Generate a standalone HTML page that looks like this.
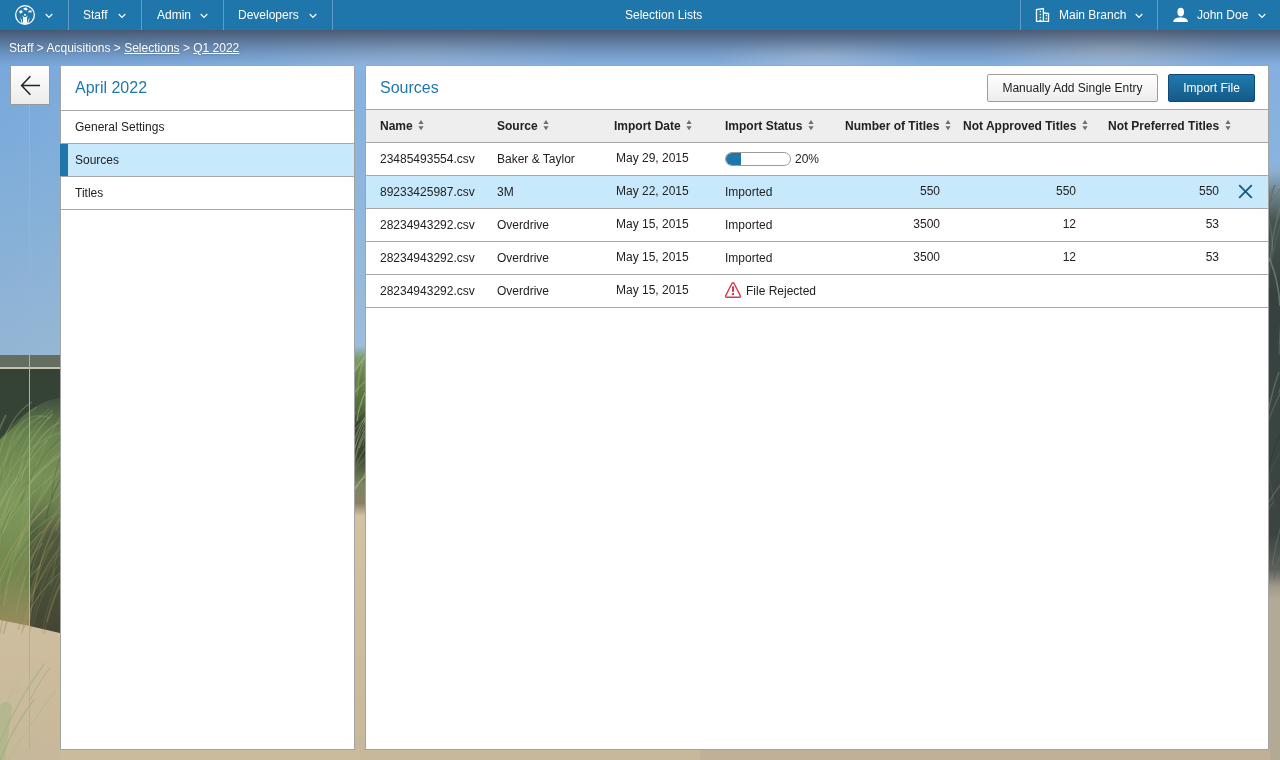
<!DOCTYPE html>
<html><head><meta charset="utf-8">
<style>
*{box-sizing:border-box;margin:0;padding:0}
html,body{width:1280px;height:760px;overflow:hidden}
.panel,.nav,.crumb{will-change:transform}
body{font-family:"Liberation Sans",sans-serif;font-size:12px;color:#222;position:relative;background:#c9b99c}
#bg{position:absolute;left:0;top:0;width:1280px;height:760px;overflow:hidden}
.nav{position:absolute;left:0;top:0;width:1280px;height:30px;background:#1e76ab;color:#fff;font-size:12px}
.nav .dv{position:absolute;top:0;width:1px;height:30px;background:#5d9cc6}
.nav .t{position:absolute;top:8px;line-height:14px;white-space:nowrap}
.nav svg{position:absolute}
.crumb{position:absolute;left:9px;top:41px;color:#fff;font-size:12px;line-height:15px;white-space:nowrap;text-shadow:0 0 2px rgba(0,0,0,.25)}
.crumb u{text-decoration:underline}
.back{position:absolute;left:10px;top:65px;width:40px;height:40px;border:1px solid #9a9a9a;background:linear-gradient(#fff,#ececec)}
.vline{position:absolute;left:29px;top:105px;width:1px;height:645px;background:#b4ada2}
.panel{position:absolute;background:#fff;border:1px solid #a3a3a3}
#lp{left:60px;top:65px;width:295px;height:685px}
#rp{left:365px;top:65px;width:904px;height:685px}
.ptitle{position:absolute;color:#1f78ae;font-size:16px;line-height:20px;white-space:nowrap}
.item{position:absolute;left:0;width:293px;height:34px;border-top:1px solid #a8a8a8;border-bottom:1px solid #a8a8a8}
.item span{position:absolute;left:14px;top:9px;line-height:15px}
.sel{background:#c8e9fc}
.item.sel:before{content:"";position:absolute;left:-1px;top:0;width:8px;height:32px;background:#1f76ab}
.btn{position:absolute;top:8px;height:28px;border-radius:2px;font-size:12px;line-height:26px;text-align:center;white-space:nowrap}
.b1{left:621px;width:171px;border:1px solid #9d9d9d;background:linear-gradient(#fff,#ececec);color:#222}
.b2{left:802px;width:87px;border:1px solid #0e4a72;background:linear-gradient(#1f7ab0,#135a88);color:#fff}
.thead{position:absolute;left:0;top:43px;width:902px;height:34px;background:#eeeeee;border-top:1px solid #a8a8a8;border-bottom:1px solid #a8a8a8}
.th{position:absolute;top:9px;font-weight:bold;line-height:15px;white-space:nowrap;color:#222}
.sort{display:inline-block;margin-left:5.5px;vertical-align:-1px}
.row{position:absolute;left:0;width:902px;height:34px;border-top:1px solid #a8a8a8;border-bottom:1px solid #a8a8a8}
.prog{position:absolute;left:359px;top:9px;width:66px;height:14px;border:1px solid #9a9a9a;border-radius:7px;overflow:hidden;background:#fff}
.prog i{position:absolute;left:0;top:0;width:15px;height:12px;background:#1f76ab}
.row .c{position:absolute;top:9px;line-height:15px;white-space:nowrap}
.row .d{top:8px}
.r{text-align:right}
</style></head><body>
<svg id="bg" width="1280" height="760" viewBox="0 0 1280 760" style="position:absolute;left:0;top:0">
  <defs>
    <linearGradient id="sky" x1="0" y1="30" x2="0" y2="360" gradientUnits="userSpaceOnUse">
      <stop offset="0" stop-color="#6f9fd4"/><stop offset="0.1" stop-color="#78a8dc"/><stop offset="0.35" stop-color="#7eacda"/><stop offset="0.65" stop-color="#88b1d7"/><stop offset="1" stop-color="#94b6d4"/>
    </linearGradient>
    <linearGradient id="shade" x1="0" y1="30" x2="0" y2="66" gradientUnits="userSpaceOnUse">
      <stop offset="0" stop-color="#353c4c" stop-opacity="0.72"/><stop offset="0.35" stop-color="#3a4458" stop-opacity="0.45"/><stop offset="0.7" stop-color="#44546c" stop-opacity="0.2"/><stop offset="1" stop-color="#44546c" stop-opacity="0"/>
    </linearGradient>
    <linearGradient id="skyh" x1="0" y1="0" x2="1280" y2="0" gradientUnits="userSpaceOnUse">
      <stop offset="0" stop-color="#ffffff" stop-opacity="0"/><stop offset="0.05" stop-color="#ffffff" stop-opacity="0.02"/><stop offset="0.28" stop-color="#d8e8ff" stop-opacity="0.14"/><stop offset="1" stop-color="#d8e8ff" stop-opacity="0.12"/>
    </linearGradient>
    <radialGradient id="cloud1" cx="1110" cy="48" r="130" gradientUnits="userSpaceOnUse" gradientTransform="translate(1110 48) scale(1 0.25) translate(-1110 -48)">
      <stop offset="0" stop-color="#c8cdd4" stop-opacity="0.55"/><stop offset="1" stop-color="#c8cdd4" stop-opacity="0"/>
    </radialGradient>
    <radialGradient id="cloud2" cx="420" cy="52" r="160" gradientUnits="userSpaceOnUse" gradientTransform="translate(420 52) scale(1 0.2) translate(-420 -52)">
      <stop offset="0" stop-color="#b8c4d4" stop-opacity="0.35"/><stop offset="1" stop-color="#b8c4d4" stop-opacity="0"/>
    </radialGradient>
    <radialGradient id="cloud3" cx="820" cy="56" r="110" gradientUnits="userSpaceOnUse" gradientTransform="translate(820 56) scale(1 0.2) translate(-820 -56)">
      <stop offset="0" stop-color="#c8d4e4" stop-opacity="0.45"/><stop offset="1" stop-color="#c8d4e4" stop-opacity="0"/>
    </radialGradient>
    <linearGradient id="lgr" x1="0" y1="369" x2="0" y2="635" gradientUnits="userSpaceOnUse">
      <stop offset="0" stop-color="#37443a"/><stop offset="0.12" stop-color="#42553e"/><stop offset="0.25" stop-color="#6a8450"/><stop offset="0.5" stop-color="#7e985c"/><stop offset="0.75" stop-color="#72884e"/><stop offset="0.9" stop-color="#8a8a58"/><stop offset="1" stop-color="#a08a60"/>
    </linearGradient>
    <linearGradient id="lgr2" x1="0" y1="480" x2="0" y2="635" gradientUnits="userSpaceOnUse">
      <stop offset="0" stop-color="#4b5a3c" stop-opacity="0"/><stop offset="0.35" stop-color="#3e4434" stop-opacity="0.7"/><stop offset="1" stop-color="#34382c" stop-opacity="0.85"/>
    </linearGradient>
    <linearGradient id="sand" x1="0" y1="500" x2="0" y2="760" gradientUnits="userSpaceOnUse">
      <stop offset="0" stop-color="#d3c3a2"/><stop offset="1" stop-color="#c8b89b"/>
    </linearGradient>
    <linearGradient id="gap" x1="0" y1="347" x2="0" y2="515" gradientUnits="userSpaceOnUse">
      <stop offset="0" stop-color="#9ab8c8"/><stop offset="0.07" stop-color="#7a9a6a"/><stop offset="0.2" stop-color="#5f7c48"/><stop offset="0.35" stop-color="#55703f"/><stop offset="0.45" stop-color="#3a4634"/><stop offset="0.65" stop-color="#3a4232"/><stop offset="0.82" stop-color="#7a8660"/><stop offset="0.93" stop-color="#8a8066"/><stop offset="1" stop-color="#cdbd9c"/>
    </linearGradient>
    <linearGradient id="rgt" x1="0" y1="160" x2="0" y2="600" gradientUnits="userSpaceOnUse">
      <stop offset="0" stop-color="#8db4d9" stop-opacity="0"/><stop offset="0.03" stop-color="#8aaccb"/><stop offset="0.08" stop-color="#6a8088"/><stop offset="0.14" stop-color="#46544f"/><stop offset="0.3" stop-color="#364140"/><stop offset="0.6" stop-color="#3a4440"/><stop offset="0.85" stop-color="#3c4442"/><stop offset="0.93" stop-color="#5c605a"/><stop offset="0.97" stop-color="#a09a8a"/><stop offset="1" stop-color="#b4ab97"/>
    </linearGradient>
  </defs>
  <rect x="0" y="30" width="1280" height="330" fill="url(#sky)"/>
  <rect x="0" y="30" width="1280" height="330" fill="url(#skyh)"/>
  <rect x="0" y="30" width="1280" height="40" fill="url(#cloud1)"/>
  <rect x="0" y="30" width="1280" height="40" fill="url(#cloud2)"/>
  <rect x="0" y="30" width="1280" height="40" fill="url(#cloud3)"/>
  <rect x="0" y="30" width="1280" height="36" fill="url(#shade)"/>
  <!-- left strip ground -->
  <rect x="0" y="355" width="60" height="405" fill="url(#sand)"/>
  <rect x="0" y="355" width="60" height="13" fill="#646e5e"/>
  <rect x="0" y="367" width="60" height="2" fill="#c4c4aa"/>
  <path d="M0 369 H60 V633 L30 626 L0 620 Z" fill="url(#lgr)"/>
  <path d="M0 369 H60 V398 Q40 400 25 415 Q10 430 0 440 Z" fill="#354236"/>
  <path d="M30 470 Q45 470 60 460 V633 L30 626 Z" fill="url(#lgr2)"/>
  <g fill="none" stroke-linecap="round">
    <path d="M0 742 Q18 700 44 664" stroke="#9ab478" stroke-width="1.6" opacity="0.55"/>
    <path d="M0 760 Q16 722 34 700" stroke="#8fae6e" stroke-width="1.4" opacity="0.5"/>
    <path d="M8 760 Q30 724 56 690" stroke="#a6b888" stroke-width="1.2" opacity="0.45"/>
    <path d="M20 760 Q40 730 60 712" stroke="#a8b890" stroke-width="1" opacity="0.4"/>
    <path d="M0 716 Q10 690 26 672" stroke="#b0b890" stroke-width="1" opacity="0.4"/>
    <path d="M30 700 Q40 680 50 668" stroke="#7a8a70" stroke-width="0.8" opacity="0.4"/>
  </g>
  <path d="M0 705 Q6 698 12 706 L5 760 H0 Z" fill="#9cb47c" opacity="0.45"/>
  <!-- gap -->
  <rect x="354" y="347" width="12" height="413" fill="url(#sand)"/>
  <rect x="354" y="347" width="12" height="168" fill="url(#gap)"/>
  <!-- right strip -->
  <rect x="1268" y="590" width="12" height="170" fill="#b3aa96"/>
  <rect x="1268" y="160" width="12" height="440" fill="url(#rgt)"/>
  <clipPath id="cl"><rect x="0" y="372" width="60" height="262"/></clipPath>
  <clipPath id="cg"><rect x="354" y="352" width="12" height="160"/></clipPath>
  <clipPath id="cr"><rect x="1268" y="185" width="12" height="400"/></clipPath>
  <g clip-path="url(#cl)" fill="none"><path d="M6 496 Q13 421 43 416" stroke="#8ea866" stroke-width="1.7" opacity="0.27"/><path d="M-13 541 Q-3 491 38 457" stroke="#9aa870" stroke-width="0.9" opacity="0.27"/><path d="M30 631 Q42 560 90 513" stroke="#8a7a50" stroke-width="1.1" opacity="0.25"/><path d="M-11 522 Q-0 437 41 417" stroke="#a4b47a" stroke-width="0.9" opacity="0.40"/><path d="M25 575 Q38 509 90 466" stroke="#5e7a44" stroke-width="1.4" opacity="0.33"/><path d="M4 605 Q15 527 57 475" stroke="#9aa870" stroke-width="1.7" opacity="0.41"/><path d="M3 637 Q11 594 41 565" stroke="#7a9a58" stroke-width="1.2" opacity="0.47"/><path d="M-14 565 Q8 482 95 426" stroke="#a4b47a" stroke-width="1.4" opacity="0.37"/><path d="M16 613 Q34 520 103 458" stroke="#a89868" stroke-width="1.4" opacity="0.48"/><path d="M46 518 Q59 459 113 420" stroke="#3a4432" stroke-width="1.2" opacity="0.37"/><path d="M19 507 Q32 454 84 418" stroke="#5e7a44" stroke-width="0.9" opacity="0.33"/><path d="M24 620 Q47 535 139 478" stroke="#a89868" stroke-width="1.5" opacity="0.31"/><path d="M-2 484 Q9 439 49 409" stroke="#9aa870" stroke-width="1.0" opacity="0.29"/><path d="M-8 561 Q3 488 47 440" stroke="#9aa870" stroke-width="1.8" opacity="0.38"/><path d="M39 548 Q65 459 167 401" stroke="#7a8258" stroke-width="1.2" opacity="0.32"/><path d="M-12 578 Q-8 538 8 512" stroke="#7a9a58" stroke-width="0.9" opacity="0.37"/><path d="M-12 566 Q8 498 87 453" stroke="#8ea866" stroke-width="1.7" opacity="0.38"/><path d="M-8 513 Q1 456 38 418" stroke="#5e7a44" stroke-width="1.8" opacity="0.34"/><path d="M19 485 Q25 442 52 414" stroke="#7a9a58" stroke-width="1.3" opacity="0.26"/><path d="M56 531 Q78 454 165 402" stroke="#8a8a62" stroke-width="1.8" opacity="0.44"/><path d="M36 514 Q43 456 70 418" stroke="#7a8258" stroke-width="1.3" opacity="0.35"/><path d="M31 574 Q52 491 134 435" stroke="#6a7a50" stroke-width="1.6" opacity="0.41"/><path d="M-2 558 Q3 501 24 462" stroke="#a4b47a" stroke-width="1.3" opacity="0.26"/><path d="M28 529 Q49 444 130 410" stroke="#8ea866" stroke-width="1.0" opacity="0.27"/><path d="M-4 505 Q16 431 98 425" stroke="#a4b47a" stroke-width="1.6" opacity="0.23"/><path d="M33 625 Q53 542 135 486" stroke="#6a7a50" stroke-width="1.6" opacity="0.30"/><path d="M44 635 Q54 575 95 536" stroke="#8a7a50" stroke-width="1.8" opacity="0.22"/><path d="M27 549 Q44 474 109 424" stroke="#5e7a44" stroke-width="1.5" opacity="0.31"/><path d="M24 492 Q35 455 78 431" stroke="#9aa870" stroke-width="1.5" opacity="0.25"/><path d="M59 503 Q67 415 98 406" stroke="#7a8258" stroke-width="1.1" opacity="0.35"/><path d="M47 480 Q69 400 158 420" stroke="#7a8258" stroke-width="1.2" opacity="0.46"/><path d="M20 560 Q26 493 50 448" stroke="#7a9a58" stroke-width="1.4" opacity="0.42"/><path d="M-8 494 Q-0 421 32 402" stroke="#9aa870" stroke-width="1.4" opacity="0.42"/><path d="M-12 565 Q-4 514 25 480" stroke="#9aa870" stroke-width="1.3" opacity="0.22"/><path d="M52 481 Q68 425 133 418" stroke="#8a8a62" stroke-width="1.3" opacity="0.35"/><path d="M18 630 Q40 552 125 500" stroke="#8a7a50" stroke-width="1.6" opacity="0.25"/><path d="M-10 545 Q-5 505 17 478" stroke="#a4b47a" stroke-width="1.6" opacity="0.45"/><path d="M-8 592 Q1 516 36 466" stroke="#8a7a50" stroke-width="1.5" opacity="0.23"/><path d="M51 498 Q61 422 101 421" stroke="#3a4432" stroke-width="1.1" opacity="0.26"/><path d="M5 593 Q13 556 43 531" stroke="#8ea866" stroke-width="1.1" opacity="0.38"/><path d="M21 481 Q45 386 142 429" stroke="#a4b47a" stroke-width="1.1" opacity="0.46"/><path d="M-5 598 Q17 513 108 457" stroke="#a4b47a" stroke-width="0.9" opacity="0.46"/><path d="M26 589 Q30 548 45 520" stroke="#5e7a44" stroke-width="1.7" opacity="0.28"/><path d="M-19 485 Q-8 433 37 407" stroke="#8ea866" stroke-width="1.3" opacity="0.30"/><path d="M24 628 Q30 575 53 541" stroke="#9a8a5c" stroke-width="1.8" opacity="0.28"/><path d="M-6 628 Q9 555 68 506" stroke="#8a7a50" stroke-width="1.1" opacity="0.43"/><path d="M60 476 Q67 439 95 414" stroke="#7a8258" stroke-width="1.3" opacity="0.46"/><path d="M-11 609 Q0 547 48 506" stroke="#a89868" stroke-width="1.5" opacity="0.47"/><path d="M7 611 Q25 533 94 481" stroke="#9a8a5c" stroke-width="1.6" opacity="0.22"/><path d="M30 620 Q36 558 60 517" stroke="#a89868" stroke-width="1.4" opacity="0.40"/><path d="M-16 502 Q-12 449 6 415" stroke="#a4b47a" stroke-width="1.8" opacity="0.36"/><path d="M-0 634 Q8 580 43 543" stroke="#9a8a5c" stroke-width="1.3" opacity="0.35"/><path d="M-4 556 Q1 520 22 495" stroke="#5e7a44" stroke-width="1.4" opacity="0.32"/><path d="M4 577 Q16 536 64 509" stroke="#7a9a58" stroke-width="1.5" opacity="0.40"/><path d="M50 536 Q67 481 133 444" stroke="#7a8258" stroke-width="1.4" opacity="0.22"/><path d="M47 622 Q65 548 136 499" stroke="#9a8a5c" stroke-width="1.6" opacity="0.37"/><path d="M51 586 Q62 508 103 457" stroke="#6a7a50" stroke-width="1.4" opacity="0.47"/><path d="M10 547 Q14 508 27 482" stroke="#7a9a58" stroke-width="1.3" opacity="0.21"/><path d="M44 597 Q57 531 110 487" stroke="#4a5a3a" stroke-width="1.1" opacity="0.23"/><path d="M1 594 Q13 546 60 513" stroke="#5e7a44" stroke-width="0.9" opacity="0.46"/><path d="M3 478 Q12 404 50 418" stroke="#a4b47a" stroke-width="1.4" opacity="0.25"/><path d="M19 553 Q28 458 68 407" stroke="#9aa870" stroke-width="1.1" opacity="0.34"/><path d="M41 639 Q52 570 93 524" stroke="#9a8a5c" stroke-width="1.1" opacity="0.23"/><path d="M21 639 Q37 543 100 480" stroke="#9a8a5c" stroke-width="1.4" opacity="0.25"/><path d="M22 632 Q33 588 79 559" stroke="#a89868" stroke-width="1.0" opacity="0.45"/><path d="M19 474 Q26 438 53 414" stroke="#a4b47a" stroke-width="1.5" opacity="0.32"/><path d="M10 491 Q19 435 53 410" stroke="#7a9a58" stroke-width="1.5" opacity="0.46"/><path d="M3 533 Q21 474 92 434" stroke="#a4b47a" stroke-width="1.7" opacity="0.41"/><path d="M48 518 Q57 479 93 453" stroke="#6a7a50" stroke-width="1.0" opacity="0.28"/><path d="M21 502 Q38 444 106 405" stroke="#5e7a44" stroke-width="1.7" opacity="0.46"/></g>
  <g clip-path="url(#cg)" fill="none"><path d="M354 477 Q359 457 378 444" stroke="#5e7a44" stroke-width="1.2" opacity="0.36"/><path d="M363 446 Q373 395 412 361" stroke="#7a9a58" stroke-width="1.1" opacity="0.44"/><path d="M348 480 Q355 427 382 391" stroke="#c0c090" stroke-width="0.9" opacity="0.49"/><path d="M357 396 Q361 355 375 328" stroke="#9aa870" stroke-width="1.3" opacity="0.5"/><path d="M346 502 Q355 448 392 413" stroke="#7a9a58" stroke-width="1.1" opacity="0.4"/><path d="M345 455 Q349 426 367 406" stroke="#9aa870" stroke-width="0.9" opacity="0.31"/><path d="M363 432 Q368 387 389 357" stroke="#a4b47a" stroke-width="1.0" opacity="0.32"/><path d="M347 511 Q351 488 368 473" stroke="#c0c090" stroke-width="1.3" opacity="0.64"/><path d="M342 501 Q349 469 377 448" stroke="#5e7a44" stroke-width="1.4" opacity="0.64"/><path d="M363 383 Q367 364 385 351" stroke="#5e7a44" stroke-width="1.4" opacity="0.5"/><path d="M342 506 Q352 454 391 420" stroke="#5e7a44" stroke-width="1.4" opacity="0.4"/><path d="M343 401 Q351 364 384 339" stroke="#c0c090" stroke-width="1.2" opacity="0.64"/><path d="M363 391 Q366 346 379 315" stroke="#7a9a58" stroke-width="0.9" opacity="0.67"/><path d="M357 421 Q360 398 371 383" stroke="#c0c090" stroke-width="1.1" opacity="0.61"/><path d="M343 421 Q348 369 372 334" stroke="#a4b47a" stroke-width="0.9" opacity="0.54"/><path d="M340 421 Q350 386 390 363" stroke="#c0c090" stroke-width="1.3" opacity="0.4"/><path d="M354 454 Q357 435 369 422" stroke="#c0c090" stroke-width="1.0" opacity="0.31"/><path d="M353 471 Q357 438 374 416" stroke="#c0c090" stroke-width="1.1" opacity="0.45"/><path d="M353 474 Q359 430 386 401" stroke="#5e7a44" stroke-width="0.9" opacity="0.62"/><path d="M359 448 Q367 423 396 406" stroke="#a4b47a" stroke-width="1.3" opacity="0.38"/><path d="M352 416 Q357 366 375 332" stroke="#9aa870" stroke-width="1.1" opacity="0.37"/><path d="M346 436 Q358 394 406 366" stroke="#7a9a58" stroke-width="1.4" opacity="0.32"/><path d="M341 460 Q348 428 379 406" stroke="#7a9a58" stroke-width="1.0" opacity="0.66"/><path d="M363 479 Q378 425 440 389" stroke="#a4b47a" stroke-width="0.9" opacity="0.56"/><path d="M354 443 Q361 414 388 394" stroke="#a4b47a" stroke-width="1.4" opacity="0.48"/></g>
  <g clip-path="url(#cr)" fill="none"><path d="M1253 231 Q1254 202 1257 183" stroke="#5a6a64" stroke-width="1.2" opacity="0.6"/><path d="M1261 507 Q1267 465 1291 437" stroke="#5a6a64" stroke-width="0.8" opacity="0.49"/><path d="M1261 568 Q1262 532 1263 508" stroke="#7a8a80" stroke-width="0.8" opacity="0.46"/><path d="M1274 507 Q1272 480 1263 463" stroke="#5a6a64" stroke-width="1.4" opacity="0.32"/><path d="M1256 225 Q1256 165 1259 125" stroke="#2a3430" stroke-width="1.6" opacity="0.55"/><path d="M1258 487 Q1257 444 1254 415" stroke="#5a6a64" stroke-width="1.4" opacity="0.54"/><path d="M1274 579 Q1278 551 1295 532" stroke="#5a6a64" stroke-width="1.2" opacity="0.68"/><path d="M1279 355 Q1280 316 1284 290" stroke="#7a8a80" stroke-width="0.9" opacity="0.5"/><path d="M1250 572 Q1255 530 1273 502" stroke="#6a7a74" stroke-width="1.3" opacity="0.43"/><path d="M1260 345 Q1254 274 1233 227" stroke="#6a7a74" stroke-width="1.1" opacity="0.36"/><path d="M1262 460 Q1266 407 1279 372" stroke="#6a7a74" stroke-width="1.6" opacity="0.65"/><path d="M1280 306 Q1278 277 1269 258" stroke="#7a8a80" stroke-width="1.6" opacity="0.69"/><path d="M1255 253 Q1264 202 1298 167" stroke="#6a7a74" stroke-width="1.4" opacity="0.64"/><path d="M1270 248 Q1269 174 1266 124" stroke="#4a5850" stroke-width="1.0" opacity="0.4"/><path d="M1258 376 Q1257 341 1253 317" stroke="#2a3430" stroke-width="1.5" opacity="0.53"/><path d="M1260 358 Q1264 275 1282 219" stroke="#6a7a74" stroke-width="1.3" opacity="0.34"/><path d="M1264 215 Q1268 191 1284 174" stroke="#6a7a74" stroke-width="1.5" opacity="0.67"/><path d="M1251 317 Q1250 286 1244 266" stroke="#4a5850" stroke-width="1.0" opacity="0.33"/><path d="M1265 271 Q1273 211 1305 171" stroke="#5a6a64" stroke-width="0.9" opacity="0.54"/><path d="M1269 287 Q1266 241 1255 210" stroke="#6a7a74" stroke-width="1.6" opacity="0.32"/><path d="M1272 566 Q1283 493 1325 444" stroke="#7a8a80" stroke-width="1.3" opacity="0.37"/><path d="M1259 281 Q1264 210 1282 162" stroke="#5a6a64" stroke-width="1.1" opacity="0.62"/><path d="M1270 262 Q1275 206 1297 168" stroke="#7a8a80" stroke-width="1.4" opacity="0.46"/><path d="M1258 323 Q1258 242 1256 188" stroke="#4a5850" stroke-width="1.5" opacity="0.47"/><path d="M1251 507 Q1257 435 1284 386" stroke="#7a8a80" stroke-width="1.4" opacity="0.38"/><path d="M1250 561 Q1257 511 1286 478" stroke="#7a8a80" stroke-width="1.3" opacity="0.45"/><path d="M1273 252 Q1272 225 1265 207" stroke="#7a8a80" stroke-width="0.9" opacity="0.55"/><path d="M1261 402 Q1261 369 1259 347" stroke="#4a5850" stroke-width="0.9" opacity="0.33"/><path d="M1262 501 Q1272 430 1312 382" stroke="#2a3430" stroke-width="0.9" opacity="0.68"/><path d="M1279 393 Q1284 366 1303 348" stroke="#7a8a80" stroke-width="0.9" opacity="0.58"/></g>
  <!-- bottom strip -->
  <rect x="60" y="749" width="1210" height="11" fill="#c7b89b"/>
  <rect x="60" y="749" width="300" height="11" fill="#c9bb9c"/>
  <rect x="700" y="749" width="570" height="11" fill="#bfb097"/>
</svg>
<div class="nav">
  <svg style="left:15px;top:5px" width="20" height="20" viewBox="0 0 20 20">
    <circle cx="10" cy="10" r="9.35" fill="none" stroke="#fff" stroke-width="1.3"/>
    <path d="M8.3 3.4 L11 2.2 L12.9 4.4 L11.4 5.6 L8.6 4.4 Z" fill="#fff"/>
    <path d="M3.9 6.6 L6.4 5 L7.9 6.9 L5.4 8.8 Z" fill="#fff"/>
    <path d="M12.9 7.3 Q13.6 4.8 16.4 5.4 L16.8 7.4 Z" fill="#fff"/>
    <rect x="9.15" y="9" width="1.7" height="1.7" fill="#fff"/>
    <path d="M7.2 10.2 L8.9 12.1 L11.1 12.1 L12.8 10.2 L12 12.8 L12 18 L8 18 L8 12.8 Z" fill="#fff"/>
    <path d="M5 12.2 L6.6 14.6 L7.6 18 L6.6 18 L6 15.2 Z M15 12.2 L13.4 14.6 L12.4 18 L13.4 18 L14 15.2 Z" fill="#fff"/>
    <path d="M6 18.3 H14" stroke="#fff" stroke-width="1.1"/>
  </svg>
  <svg style="left:44.5px;top:13px" width="8" height="6" viewBox="0 0 8 6"><path d="M0.7 1 L4 4.5 L7.3 1" fill="none" stroke="#fff" stroke-width="1.15"/></svg>
  <div class="dv" style="left:68px"></div>
  <div class="t" style="left:83px">Staff</div>
  <svg style="left:117.5px;top:13px" width="8" height="6" viewBox="0 0 8 6"><path d="M0.7 1 L4 4.5 L7.3 1" fill="none" stroke="#fff" stroke-width="1.15"/></svg>
  <div class="dv" style="left:141px"></div>
  <div class="t" style="left:157px">Admin</div>
  <svg style="left:200px;top:13px" width="8" height="6" viewBox="0 0 8 6"><path d="M0.7 1 L4 4.5 L7.3 1" fill="none" stroke="#fff" stroke-width="1.15"/></svg>
  <div class="dv" style="left:223px"></div>
  <div class="t" style="left:238px">Developers</div>
  <svg style="left:309px;top:13px" width="8" height="6" viewBox="0 0 8 6"><path d="M0.7 1 L4 4.5 L7.3 1" fill="none" stroke="#fff" stroke-width="1.15"/></svg>
  <div class="dv" style="left:332px"></div>
  <div class="t" style="left:625px">Selection Lists</div>
  <div class="dv" style="left:1020px"></div>
  <svg style="left:1035px;top:7px" width="15" height="16" viewBox="0 0 15 16">
    <path d="M1.5 14.3 V2.6 L8.4 1.6 V14.3 Z M8.4 14.3 V5.8 L13.5 6.6 V14.3 Z" fill="none" stroke="#fff" stroke-width="1.3" stroke-linejoin="miter"/>
    <circle cx="5.3" cy="4.6" r="0.75" fill="#fff"/><circle cx="5.3" cy="7.6" r="0.75" fill="#fff"/><circle cx="5.3" cy="10.6" r="0.75" fill="#fff"/>
    <circle cx="11.3" cy="8.6" r="0.75" fill="#fff"/><circle cx="11.3" cy="11.6" r="0.75" fill="#fff"/>
    <path d="M4.3 14.3 V13 Q5.3 12 6.3 13 V14.3 Z" fill="#fff"/>
  </svg>
  <div class="t" style="left:1059px">Main Branch</div>
  <svg style="left:1134.5px;top:13px" width="8" height="6" viewBox="0 0 8 6"><path d="M0.7 1 L4 4.5 L7.3 1" fill="none" stroke="#fff" stroke-width="1.15"/></svg>
  <div class="dv" style="left:1157px"></div>
  <svg style="left:1172px;top:6px" width="17" height="17" viewBox="0 0 17 17">
    <ellipse cx="8.7" cy="6.1" rx="3.3" ry="4.3" fill="#fff"/>
    <path d="M1.1 16 Q1.6 11.6 8.6 11.3 Q15.6 11.6 16 16 Z" fill="#fff"/>
  </svg>
  <div class="t" style="left:1197px">John Doe</div>
  <svg style="left:1257.5px;top:13px" width="8" height="6" viewBox="0 0 8 6"><path d="M0.7 1 L4 4.5 L7.3 1" fill="none" stroke="#fff" stroke-width="1.15"/></svg>
</div>

<div class="crumb">Staff &gt; Acquisitions &gt; <u>Selections</u> &gt; <u>Q1 2022</u></div>

<div class="back"><svg style="position:absolute;left:9px;top:9px" width="21" height="21" viewBox="0 0 21 21"><path d="M20 10.5 H1.6 M10.4 1.2 L1.6 10.5 L10.4 19.8" fill="none" stroke="#222" stroke-width="1.5"/></svg></div>
<div class="vline"></div>

<div class="panel" id="lp">
  <div class="ptitle" style="left:14px;top:12px">April 2022</div>
  <div class="item" style="top:44px"><span>General Settings</span></div>
  <div class="item sel" style="top:77px"><span>Sources</span></div>
  <div class="item" style="top:110px"><span>Titles</span></div>
</div>

<div class="panel" id="rp">
  <div class="ptitle" style="left:14px;top:12px">Sources</div>
  <div class="btn b1">Manually Add Single Entry</div>
  <div class="btn b2">Import File</div>
  <div class="thead">
    <div class="th" style="left:14px">Name<svg class="sort" width="6" height="11" viewBox="0 0 6 11"><path d="M0.4 4 L3 0 L5.6 4 Z M0.4 6.2 L3 10.2 L5.6 6.2 Z" fill="#6e6e6e"/></svg></div>
    <div class="th" style="left:131px">Source<svg class="sort" width="6" height="11" viewBox="0 0 6 11"><path d="M0.4 4 L3 0 L5.6 4 Z M0.4 6.2 L3 10.2 L5.6 6.2 Z" fill="#6e6e6e"/></svg></div>
    <div class="th" style="left:248px">Import Date<svg class="sort" width="6" height="11" viewBox="0 0 6 11"><path d="M0.4 4 L3 0 L5.6 4 Z M0.4 6.2 L3 10.2 L5.6 6.2 Z" fill="#6e6e6e"/></svg></div>
    <div class="th" style="left:359px">Import Status<svg class="sort" width="6" height="11" viewBox="0 0 6 11"><path d="M0.4 4 L3 0 L5.6 4 Z M0.4 6.2 L3 10.2 L5.6 6.2 Z" fill="#6e6e6e"/></svg></div>
    <div class="th" style="left:479px">Number of Titles<svg class="sort" width="6" height="11" viewBox="0 0 6 11"><path d="M0.4 4 L3 0 L5.6 4 Z M0.4 6.2 L3 10.2 L5.6 6.2 Z" fill="#6e6e6e"/></svg></div>
    <div class="th" style="left:597px">Not Approved Titles<svg class="sort" width="6" height="11" viewBox="0 0 6 11"><path d="M0.4 4 L3 0 L5.6 4 Z M0.4 6.2 L3 10.2 L5.6 6.2 Z" fill="#6e6e6e"/></svg></div>
    <div class="th" style="left:742px">Not Preferred Titles<svg class="sort" width="6" height="11" viewBox="0 0 6 11"><path d="M0.4 4 L3 0 L5.6 4 Z M0.4 6.2 L3 10.2 L5.6 6.2 Z" fill="#6e6e6e"/></svg></div>
  </div>
  <div class="row" style="top:76px">
    <div class="c" style="left:14px">23485493554.csv</div>
    <div class="c" style="left:131px">Baker &amp; Taylor</div>
    <div class="c d" style="left:250px">May 29, 2015</div>
    <div class="prog"><i></i></div>
    <div class="c" style="left:429px">20%</div>
  </div>
  <div class="row sel" style="top:109px">
    <div class="c" style="left:14px">89233425987.csv</div>
    <div class="c" style="left:131px">3M</div>
    <div class="c d" style="left:250px">May 22, 2015</div>
    <div class="c" style="left:359px">Imported</div>
    <div class="c r d" style="right:328px">550</div>
    <div class="c r d" style="right:192px">550</div>
    <div class="c r d" style="right:49px">550</div>
    <svg style="position:absolute;left:872px;top:8px" width="15" height="15" viewBox="0 0 15 15"><path d="M1.2 1.2 L13.8 13.8 M13.8 1.2 L1.2 13.8" stroke="#135d8b" stroke-width="1.9"/></svg>
  </div>
  <div class="row" style="top:142px">
    <div class="c" style="left:14px">28234943292.csv</div>
    <div class="c" style="left:131px">Overdrive</div>
    <div class="c d" style="left:250px">May 15, 2015</div>
    <div class="c" style="left:359px">Imported</div>
    <div class="c r d" style="right:328px">3500</div>
    <div class="c r d" style="right:192px">12</div>
    <div class="c r d" style="right:49px">53</div>
  </div>
  <div class="row" style="top:175px">
    <div class="c" style="left:14px">28234943292.csv</div>
    <div class="c" style="left:131px">Overdrive</div>
    <div class="c d" style="left:250px">May 15, 2015</div>
    <div class="c" style="left:359px">Imported</div>
    <div class="c r d" style="right:328px">3500</div>
    <div class="c r d" style="right:192px">12</div>
    <div class="c r d" style="right:49px">53</div>
  </div>
  <div class="row" style="top:208px">
    <div class="c" style="left:14px">28234943292.csv</div>
    <div class="c" style="left:131px">Overdrive</div>
    <div class="c d" style="left:250px">May 15, 2015</div>
    <svg style="position:absolute;left:358px;top:6px" width="18" height="18" viewBox="0 0 18 18"><path d="M7.9 2.5 Q9 0.9 10.1 2.5 L16.3 14.6 Q16.9 16.3 15.2 16.3 H2.8 Q1.1 16.3 1.7 14.6 Z" fill="none" stroke="#d63a4e" stroke-width="1.4" stroke-linejoin="round"/><path d="M9 5.4 V10.8" stroke="#d63a4e" stroke-width="2.1"/><rect x="7.95" y="11.9" width="2.1" height="2" fill="#d63a4e"/></svg>
    <div class="c" style="left:380px">File Rejected</div>
  </div>
</div>
</body></html>
